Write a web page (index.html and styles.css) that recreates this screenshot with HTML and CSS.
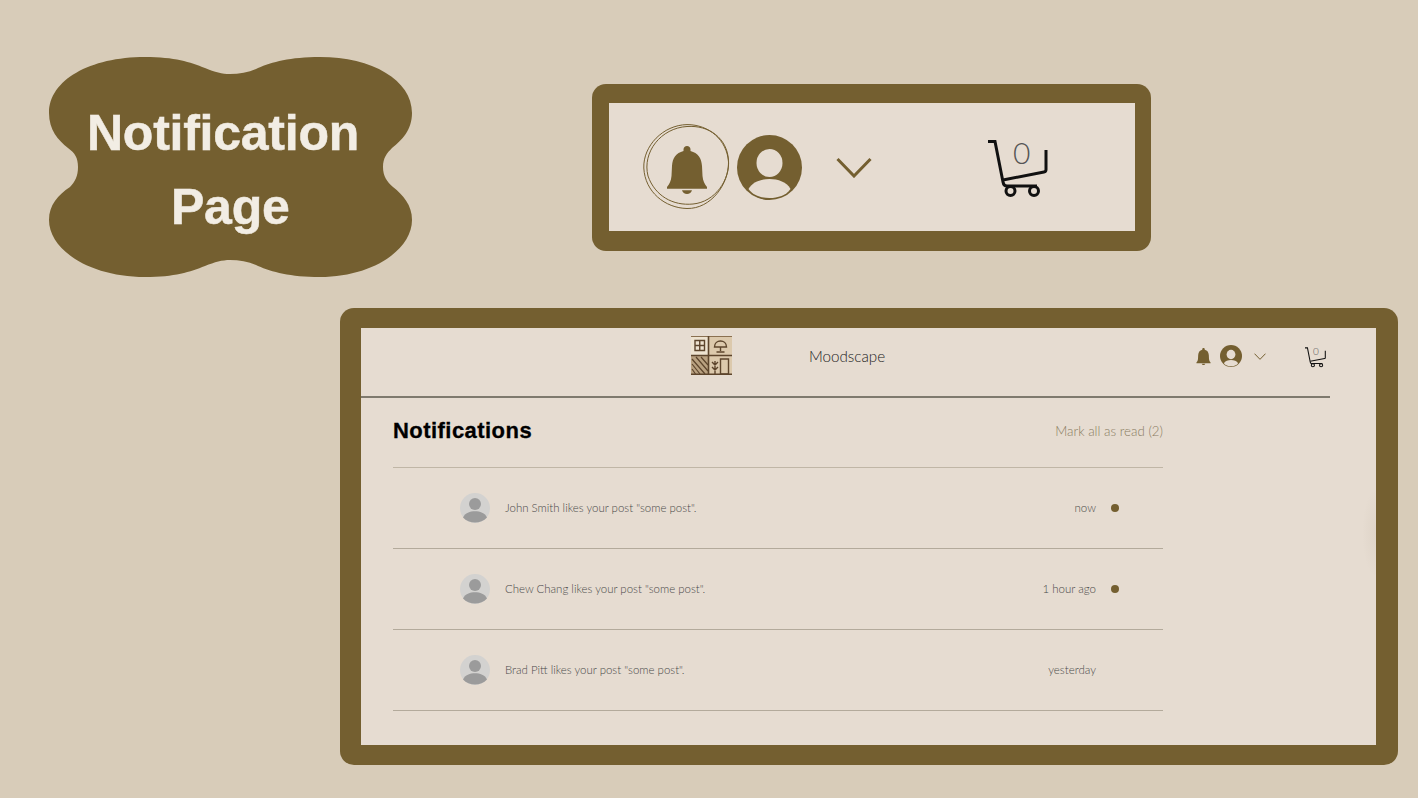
FILE: index.html
```html
<!DOCTYPE html>
<html>
<head>
<title>Notification Page</title>
<meta charset="UTF-8">
<meta name="viewport" content="width=device-width, initial-scale=1">
<link rel="stylesheet" href="styles.css">
</head>
<body>

<!-- shared icons -->
<svg class="icon-defs" width="0" height="0">
    <symbol id="bell" viewBox="0 0 40 48">
        <path d="M20 0c-2 0-3.500 1.500-3.500 3.500v1.500C9 7 5.500 12 5 20L4.500 30C4 35 2.500 38 0 41v1.800h40V41C37.500 38 36 35 35.500 30L35 20C34.500 12 31 7 23.500 5V3.500C23.500 1.500 22 0 20 0z"/>
        <path d="M15 44.300h10c-.6 2.200-2.600 3.700-5 3.700s-4.400-1.500-5-3.700z"/>
    </symbol>
    <symbol id="avatar" viewBox="0 0 65 65">
        <circle cx="32.500" cy="32.500" r="32.500" fill="#745f30"/>
        <ellipse cx="32.500" cy="28" rx="13" ry="14" fill="#e6dcd1"/>
        <path d="M11.500 54C15 47 24 44 32.500 44S50 47 53.500 54C49 60.500 41 63 32.500 63S16 60.500 11.500 54z" fill="#e6dcd1"/>
    </symbol>
    <symbol id="chevron" viewBox="0 0 36 21">
        <path d="M1.500 2L18 19 34.500 2" fill="none" stroke="#745f30" stroke-width="3"/>
    </symbol>
    <symbol id="cart" viewBox="0 0 60 58">
        <path d="M0 1.500h7L15 42c.5 3 1.500 4 4 4h30" fill="none" stroke="#111" stroke-width="3"/>
        <path d="M15 40l41-8c1.500-.3 2-1 2-2.500V10" fill="none" stroke="#111" stroke-width="3"/>
        <circle cx="22.500" cy="51" r="4.500" fill="none" stroke="#111" stroke-width="3"/>
        <circle cx="46" cy="51" r="4.500" fill="none" stroke="#111" stroke-width="3"/>
    </symbol>
    <symbol id="person" viewBox="0 0 30 30">
        <circle cx="15" cy="15" r="15" fill="#d3d2d0"/>
        <circle cx="15" cy="11" r="6" fill="#9b9b9b"/>
        <path d="M3 24.500C5 20 10 18.300 15 18.300s10 1.700 12 6.200C24 28 19.500 29.600 15 29.600S6 28 3 24.500z" fill="#9b9b9b"/>
    </symbol>
</svg>

<!-- title blob -->
<div class="blob">
    <svg class="blob-shape" viewBox="49 57 363 220" width="363" height="220">
        <path d="M49 113C49 80 90 57 145 57C175 57 190 62 205 68C215 72 222 74 230 74C240 74 250 72 258 68C272 62 290 57 320 57C372 57 412 80 412 113C412 130 402 140 392 148C387 153 383 158 383 167C383 176 387 182 393 187C403 195 412 205 412 220C412 250 372 277 320 277C290 277 272 272 258 266C250 262 240 260 230 260C222 260 215 262 205 266C190 272 175 277 145 277C90 277 49 250 49 220C49 205 58 195 70 187C75 182 78 176 78 167C78 158 75 153 68 148C58 140 49 130 49 113Z" fill="#745f30"/>
    </svg>
    <h1 class="blob-title">
        <span class="blob-line-1">Notification</span>
        <span class="blob-line-2">Page</span>
    </h1>
</div>

<!-- zoomed header icons -->
<div class="frame frame-icons">
    <div class="icons-inner">
        <div class="bell-ring">
            <svg class="scribble" viewBox="0 0 88 86" width="88" height="86">
                <path d="M44 .6C66 .5 84 16 85.500 38C86 60 68 85 44 84.500C22 84 2 68 .8 44C0 22 20 1 44 .6Z" fill="none" stroke="#745f30"/>
                <path d="M44 2.500C66 1 84 14 85.500 36C87 56 72 78 50 80C30 82 12 72 5 52C-1 28 18 4 44 2.500Z" fill="none" stroke="#745f30"/>
            </svg>
            <svg class="bell-big"><use href="#bell"/></svg>
        </div>
        <svg class="avatar-big"><use href="#avatar"/></svg>
        <svg class="chevron-big"><use href="#chevron"/></svg>
        <div class="cart-big">
            <svg class="cart-svg"><use href="#cart"/></svg>
            <span class="cart-count">0</span>
        </div>
    </div>
</div>

<!-- page mockup -->
<div class="frame frame-page">
    <div class="page">
        <header class="topbar">
            <svg class="logo" viewBox="0 0 41 39" width="41" height="39">
                <rect width="41" height="39" fill="#dcc9ac"/>
                <rect x="0" y="0" width="17" height="19" fill="#eee3d0"/>
                <rect x="0" y="20" width="17" height="19" fill="#b9a180"/>
                <path d="M1 23L14 38M1 28L9 38M1 33L4.500 38M5 21L17 35M10 21L17 29" stroke="#5d452c" stroke-width="1.200"/>
                <path d="M0 .5H41" stroke="#8a7050"/>
                <path d="M0 19.500H41M0 38.200H41M17.500 0V39" stroke="#5d452c" stroke-width="1.600" fill="none"/>
                <path d="M4 4.500h9.500v10H4zM8.750 4.500v10M4 9.500h9.500" stroke="#5d452c" fill="none" stroke-width="1.400"/>
                <path d="M23.500 11c0-8 12-8 12 0zM29.500 11v4M25.500 16h8" stroke="#5d452c" fill="none" stroke-width="1.400"/>
                <path d="M29.500 23h8v15h-8zM24 25v13M21 26l3 3 3-3M21 31l3 3 3-3" stroke="#5d452c" fill="none" stroke-width="1.400"/>
            </svg>
            <span class="brand">Moodscape</span>
            <div class="topbar-icons">
                <svg class="bell-small"><use href="#bell"/></svg>
                <svg class="avatar-small"><use href="#avatar"/></svg>
                <svg class="chevron-small"><use href="#chevron"/></svg>
                <div class="cart-small">
                    <svg class="cart-svg"><use href="#cart"/></svg>
                    <span class="cart-count-small">0</span>
                </div>
            </div>
        </header>

        <main class="notifications">
            <div class="notifications-head">
                <h2>Notifications</h2>
                <a class="mark-read" href="javascript:;">Mark all as read (2)</a>
            </div>
            <div class="row">
                <svg class="person"><use href="#person"/></svg>
                <span class="message">John Smith likes your post "some post".</span>
                <span class="when">now</span>
                <span class="dot"></span>
            </div>
            <div class="row">
                <svg class="person"><use href="#person"/></svg>
                <span class="message">Chew Chang likes your post "some post".</span>
                <span class="when">1 hour ago</span>
                <span class="dot"></span>
            </div>
            <div class="row">
                <svg class="person"><use href="#person"/></svg>
                <span class="message">Brad Pitt likes your post "some post".</span>
                <span class="when">yesterday</span>
                <span class="no-dot"></span>
            </div>
        </main>
    </div>
</div>

</body>
</html>
```

FILE: styles.css
```css
/* slide */
body {
    margin: 0;
    width: 1418px;
    height: 798px;
    position: relative;
    overflow: hidden;
    background: #d8ccb9;
    font-family: "Lato", "Liberation Sans", sans-serif;
    font-weight: 300;
}

.icon-defs {
    position: absolute;
}

/* title blob */
.blob {
    position: absolute;
    left: 49px;
    top: 57px;
    width: 363px;
    height: 220px;
}

.blob-shape {
    position: absolute;
    left: 0;
    top: 0;
}

.blob-title {
    position: relative;
    margin: 0;
    padding-top: 39px;
    font-family: "Liberation Sans", Arial, sans-serif;
    font-size: 50px;
    line-height: 74px;
    letter-spacing: -0.25px;
    font-weight: 700;
    -webkit-text-stroke: 0.5px #f2ede4;
    color: #f2ede4;
}

.blob-line-1,
.blob-line-2 {
    display: block;
}

.blob-line-1 {
    padding-left: 38px;
}

.blob-line-2 {
    padding-left: 122px;
}

/* frames */
.frame {
    position: absolute;
    box-sizing: border-box;
    background: #745f30;
    border-radius: 14px;
}

.frame-icons {
    left: 592px;
    top: 84px;
    width: 559px;
    height: 167px;
    padding: 19px 16px 20px 17px;
}

.frame-page {
    left: 340px;
    top: 308px;
    width: 1058px;
    height: 457px;
    padding: 20px 22px 20px 21px;
}

/* zoomed icons */
.icons-inner {
    display: flex;
    align-items: center;
    height: 100%;
    padding-left: 34px;
    background: #e6dcd1;
}

.bell-ring {
    position: relative;
    display: flex;
    justify-content: center;
    align-items: center;
    width: 88px;
    height: 86px;
    margin-right: 6px;
}

.scribble {
    position: absolute;
    left: 0;
    top: 0;
    overflow: visible;
}

.bell-big {
    width: 40px;
    height: 48px;
    margin-top: 5px;
    fill: #745f30;
}

.avatar-big {
    width: 65px;
    height: 65px;
    margin-right: 34px;
}

.chevron-big {
    width: 36px;
    height: 21px;
    margin-right: 116px;
}

.cart-big {
    position: relative;
    width: 60px;
    height: 58px;
    margin-top: 4px;
}

.cart-svg {
    display: block;
    width: 100%;
    height: 100%;
}

.cart-count {
    position: absolute;
    left: 25px;
    top: -6px;
    font-size: 30px;
    line-height: 36px;
    color: #555;
}

/* page mockup */
.page {
    position: relative;
    height: 100%;
    background: #e6dcd1;
}

/* faint shadow on the right edge */
.page::after {
    content: "";
    position: absolute;
    right: 0;
    top: 160px;
    width: 14px;
    height: 90px;
    background: radial-gradient(ellipse at right, rgba(90, 70, 40, 0.05), rgba(90, 70, 40, 0) 70%);
}

.topbar {
    position: relative;
    display: flex;
    align-items: center;
    box-sizing: border-box;
    width: 969px;
    height: 70px;
    padding-left: 330px;
    padding-bottom: 12px;
    border-bottom: 2px solid #7f7a6e;
}

.logo {
    margin-right: 77px;
    margin-bottom: 2px;
}

.brand {
    font-size: 15.200px;
    color: #222;
}

.topbar-icons {
    display: flex;
    align-items: center;
    margin-left: auto;
    margin-right: 4px;
}

.bell-small {
    width: 15px;
    height: 17px;
    margin-right: 9px;
    fill: #745f30;
}

.avatar-small {
    width: 22px;
    height: 22px;
    margin-right: 12px;
}

.chevron-small {
    width: 12px;
    height: 7px;
    margin-right: 39px;
}

.cart-small {
    position: relative;
    width: 21px;
    height: 21px;
    margin-top: 2px;
}

.cart-count-small {
    position: absolute;
    left: 8px;
    top: -2px;
    font-size: 10px;
    line-height: 12px;
    color: #555;
}

/* list */
.notifications {
    width: 770px;
    margin-left: 32px;
}

.notifications-head {
    display: flex;
    justify-content: space-between;
    align-items: center;
    box-sizing: border-box;
    height: 70px;
    padding-bottom: 3px;
    border-bottom: 1px solid #c0b6a6;
}

.notifications-head h2 {
    margin: 0;
    font-family: "Liberation Sans", Arial, sans-serif;
    font-size: 22px;
    font-weight: 700;
    letter-spacing: 0.45px;
    -webkit-text-stroke: 0.3px #000;
    color: #000;
}

.mark-read {
    font-size: 13.300px;
    color: #8b7d63;
    text-decoration: none;
}

.row {
    display: flex;
    align-items: center;
    box-sizing: border-box;
    height: 81px;
    padding-left: 67px;
    border-bottom: 1px solid #b3aa9b;
}

.person {
    width: 30px;
    height: 30px;
    margin-right: 15px;
}

.message {
    flex: 1;
    padding-bottom: 2px;
    font-size: 11.450px;
    color: #4a4a4a;
}

.when {
    padding-bottom: 2px;
    font-size: 11.500px;
    color: #4a4a4a;
}

.dot,
.no-dot {
    width: 8px;
    height: 8px;
    margin-left: 15px;
    margin-right: 44px;
    border-radius: 50%;
}

.dot {
    background: #745f30;
}
```
